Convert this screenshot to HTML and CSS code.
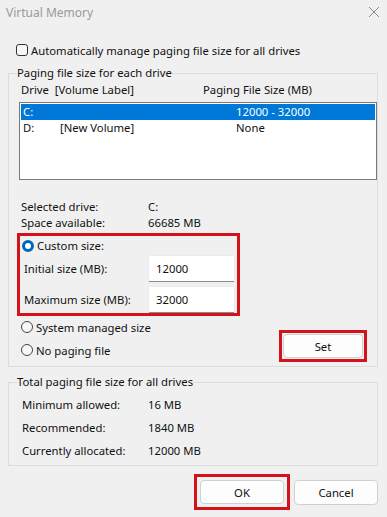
FILE: index.html
```html
<!doctype html>
<html>
<head>
    <title>Virtual Memory</title>
    <link rel="stylesheet" href="styles.css">
</head>
<body>
<div class="dialog">
    <div class="titlebar">
        <span>Virtual Memory</span>
        <svg class="close" width="12" height="12" viewBox="0 0 12 12">
            <path d="M1 1 L11 11 M11 1 L1 11" stroke="#8a8a8a" stroke-width="1" fill="none"/>
        </svg>
    </div>

    <label class="auto"><span class="check"></span>Automatically manage paging file size for all drives</label>

    <fieldset class="group group1">
        <legend>Paging file size for each drive</legend>
        <div class="head">
            <span>Drive&nbsp;&nbsp;[Volume Label]</span>
            <span>Paging File Size (MB)</span>
        </div>
        <div class="listbox">
            <div class="row selected"><span>C:</span><span></span><span>12000 - 32000</span></div>
            <div class="row"><span>D:</span><span>[New Volume]</span><span>None</span></div>
        </div>

        <div class="info">
            <span>Selected drive:</span><span>C:</span>
            <span>Space available:</span><span>66685 MB</span>
        </div>

        <div class="lower">
            <div class="choices">
                <div class="hl custom">
                    <label class="radio-row"><span class="radio on"></span>Custom size:</label>
                    <div class="field"><span>Initial size (MB):</span><span class="input">12000</span></div>
                    <div class="field"><span>Maximum size (MB):</span><span class="input">32000</span></div>
                </div>
                <label class="radio-row plain"><span class="radio"></span>System managed size</label>
                <label class="radio-row plain"><span class="radio"></span>No paging file</label>
            </div>
            <div class="hl set-box"><button class="btn set">Set</button></div>
        </div>
    </fieldset>

    <fieldset class="group group2">
        <legend>Total paging file size for all drives</legend>
        <div class="totals">
            <span>Minimum allowed:</span><span>16 MB</span>
            <span>Recommended:</span><span>1840 MB</span>
            <span>Currently allocated:</span><span>12000 MB</span>
        </div>
    </fieldset>

    <div class="footer">
        <div class="hl ok-box"><button class="btn">OK</button></div>
        <button class="btn cancel">Cancel</button>
    </div>
</div>
</body>
</html>
```

FILE: styles.css
```css
body {
    margin: 0;
    background: #f0f0f0;
    color: #111;
    font-family: "Noto Sans", "Open Sans", sans-serif;
    font-size: 11.3px;
}

.dialog {
    width: 387px;
    height: 517px;
    overflow: hidden;
}

.titlebar {
    height: 24px;
    display: flex;
    align-items: center;
    justify-content: space-between;
    padding: 0 7px 0 6px;
    color: #9a9a9a;
    font-size: 12px;
}

.auto {
    display: flex;
    align-items: center;
    gap: 3px;
    height: 18px;
    margin-top: 17px;
    padding-left: 16px;
}

.check {
    width: 10px;
    height: 10px;
    border: 1px solid #333;
    border-radius: 3px;
    background: #f7f7f7;
}

.group {
    box-sizing: border-box;
    width: 370px;
    margin: 0 0 0 8px;
    border: 1px solid #dcdcdc;
    padding: 0 0 0 10px;
}

.group legend {
    padding: 0;
    margin-left: -2px;
    line-height: 14px;
    height: 14px;
}

.group1 {
    margin-top: 7px;
    padding-bottom: 4px;
}

.head {
    display: grid;
    grid-template-columns: 182px 1fr;
    line-height: 14px;
    margin-top: 3px;
    padding-left: 2px;
}

.listbox {
    box-sizing: border-box;
    height: 78px;
    margin-top: 5px;
    border: 1px solid #7a7a7a;
    background: #fff;
    padding: 1px;
}

.row {
    display: grid;
    grid-template-columns: 37px 176px 1fr;
    height: 16px;
    line-height: 16px;
    padding-left: 2px;
}

.row.selected {
    background: #0078d7;
    color: #fff;
}

.info {
    display: grid;
    grid-template-columns: 127px 1fr;
    line-height: 16px;
    margin-top: 19px;
    padding-left: 2px;
}

.lower {
    display: flex;
    justify-content: space-between;
}

.hl {
    border: 3px solid #d3121c;
}

.custom {
    width: 217px;
    margin: 2px 0 0 -2px;
}

.radio-row {
    display: flex;
    align-items: center;
    gap: 3px;
    height: 19px;
    padding-left: 2px;
}

.radio {
    box-sizing: border-box;
    width: 12px;
    height: 12px;
    border: 1px solid #444;
    border-radius: 50%;
    background: #f7f7f7;
}

.radio.on {
    border: 3.5px solid #0067c0;
    background: #fff;
}

.field {
    display: grid;
    grid-template-columns: 124px 87px;
    align-items: center;
    height: 27px;
    padding-left: 4px;
}

.field + .field {
    margin-top: 4px;
}

.input {
    box-sizing: border-box;
    height: 27px;
    line-height: 26px;
    padding-left: 7px;
    background: #fff;
    border: 1px solid #ececec;
    border-bottom-color: #8a8a8a;
    border-radius: 2px;
}

.radio-row.plain {
    height: 20px;
    padding-left: 2px;
}

.radio-row.plain:first-of-type {
    margin-top: 1px;
}

.radio-row.plain + .radio-row.plain {
    margin-top: 3px;
}

.set-box {
    align-self: flex-start;
    margin: 99px 10px 0 0;
    padding: 1px;
    background: #f0f0f0;
}

.btn {
    box-sizing: border-box;
    width: 84px;
    height: 24px;
    border: 1px solid #d0d0d0;
    border-radius: 4px;
    background: #fdfdfd;
    font: inherit;
    color: #111;
    padding: 0;
}

.btn.set {
    width: 80px;
    display: block;
}

.group2 {
    margin-top: 8px;
    padding-bottom: 3px;
}

.totals {
    display: grid;
    grid-template-columns: 126px 1fr;
    grid-auto-rows: 23px;
    align-items: center;
    margin-top: 4px;
    padding-left: 3px;
}

.footer {
    display: flex;
    justify-content: flex-end;
    align-items: center;
    gap: 4px;
    margin-top: 8px;
    padding-right: 9px;
}

.ok-box {
    padding: 3px;
}

.ok-box .btn {
    display: block;
}

.cancel {
    height: 25px;
}
```
